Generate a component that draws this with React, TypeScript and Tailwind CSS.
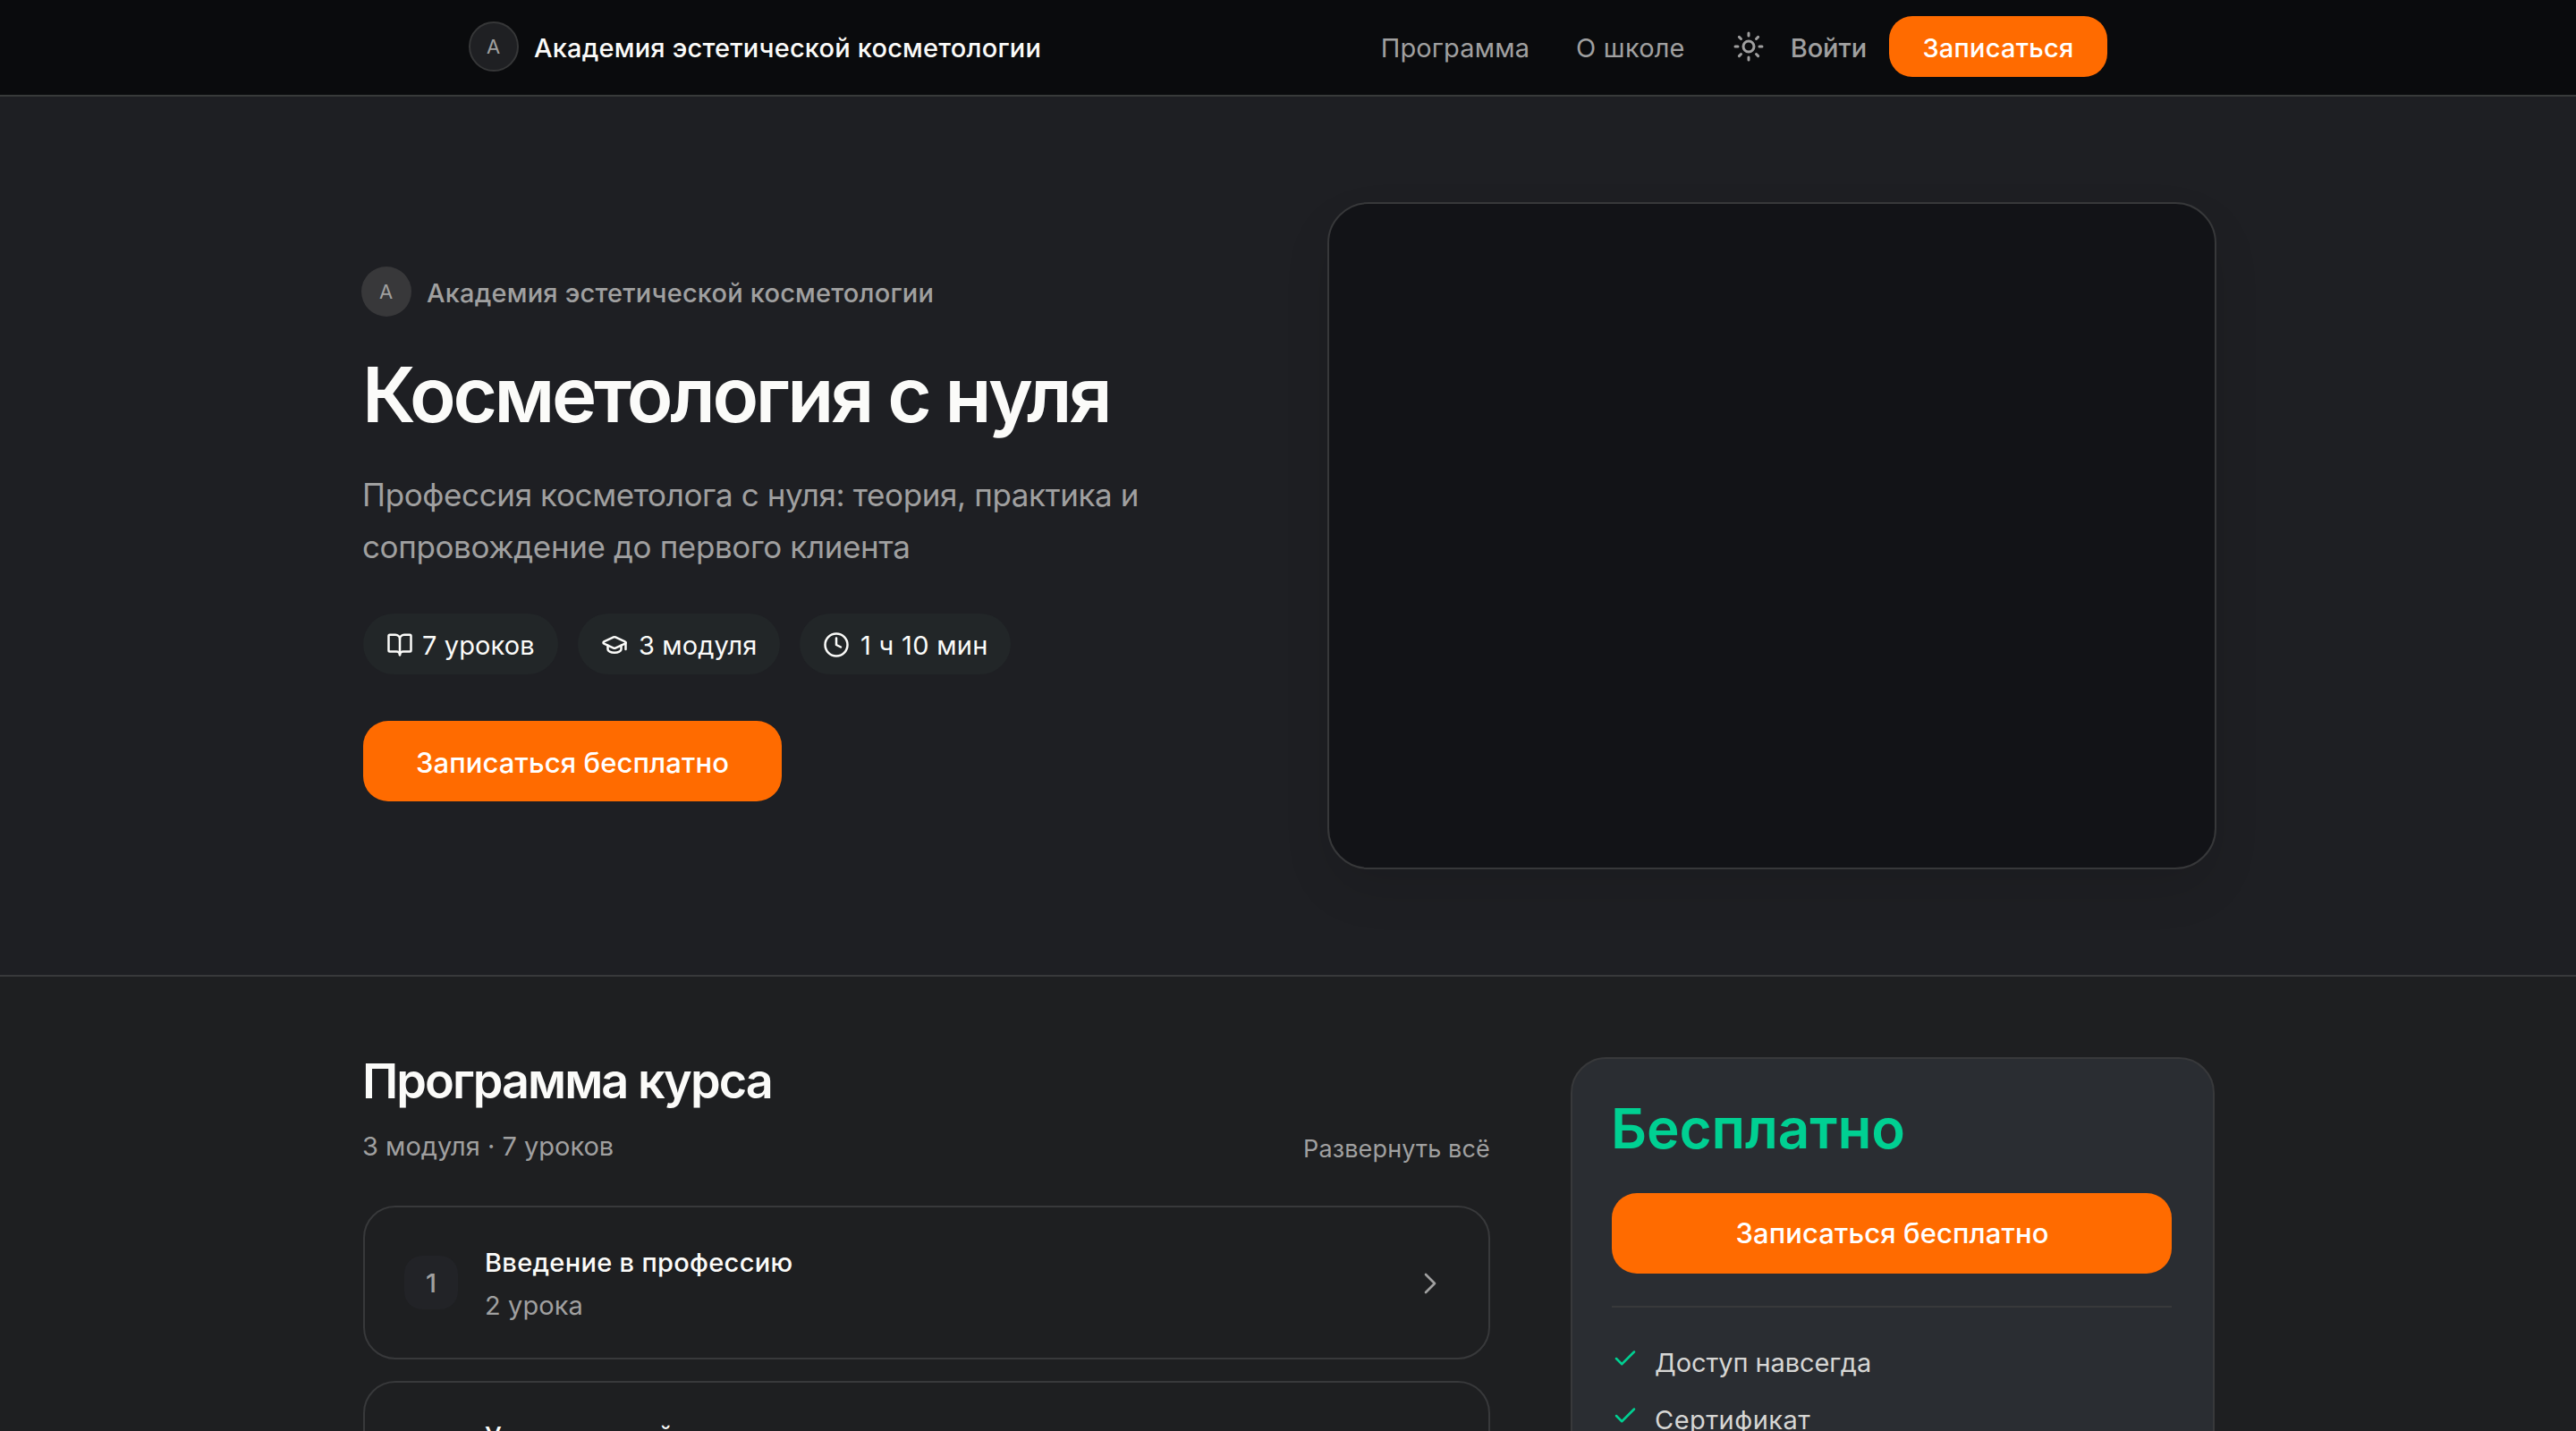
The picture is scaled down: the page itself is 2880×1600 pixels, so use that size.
import { BookOpen, Check, ChevronRight, Clock, GraduationCap, Sun } from 'lucide-react';

const modules = [
  { id: 1, title: 'Введение в профессию', lessons: '2 урока', className: 'pt-[3px]' },
  { id: 2, title: 'Уход за кожей', lessons: '', className: 'pb-px' },
];

const benefits = [
  { text: 'Доступ навсегда', className: 'tracking-[-0.1px]' },
  { text: 'Сертификат', className: 'tracking-[0.45px]' },
];

function Header() {
  return (
    <header className="h-[108px] border-b-2 border-[#383a3a] bg-[#0a0b0d]">
      <div className="mx-auto flex h-[104px] w-[1832px] items-center justify-between">
        <a className="flex items-center gap-[17px]">
          <span className="flex size-14 items-center justify-center rounded-full border-2 border-[#363738] bg-[#1f2023] pr-px text-[22px] leading-none text-[#a0a0a0]">
            А
          </span>
          <span className="pt-[3px] text-[29px] leading-[40px] font-medium tracking-[0.2px] text-[#fbfbf9]">
            Академия эстетической косметологии
          </span>
        </a>

        <nav className="flex items-center text-[29px] leading-[40px] text-[#a0a0a0]">
          <a className="mr-[52px] pt-[3px] tracking-[0.15px]">Программа</a>
          <a className="mr-[53px] pt-[3px] tracking-[0.2px]">О школе</a>
          <button type="button" aria-label="Тема" className="mr-[29px]">
            <Sun size={36} strokeWidth={2} />
          </button>
          <a className="mr-[25px] pt-[3px] font-medium tracking-[-0.1px]">Войти</a>
          <button
            type="button"
            className="h-[68px] w-[244px] rounded-[26px] bg-[#ff6b00] pt-[3px] font-medium tracking-[0.25px] text-white"
          >
            Записаться
          </button>
        </nav>
      </div>
    </header>
  );
}

function Hero() {
  return (
    <section className="h-[984px] border-b-2 border-[#38393b] bg-[#1e1f23] pt-[118px]">
      <div className="mx-auto flex w-[2072px] justify-between">
        <div className="pt-[72px]">
          <div className="flex items-center gap-[17px]">
            <span className="flex size-14 items-center justify-center rounded-full bg-[#38383a] pr-px text-[22px] leading-none text-[#a0a0a0]">
              А
            </span>
            <span className="pt-[3px] text-[29px] leading-[40px] font-medium tracking-[0.2px] text-[#a0a0a0]">
              Академия эстетической косметологии
            </span>
          </div>

          <div className="pl-0.5">
            <h1 className="mt-[39px] -ml-px pt-px text-[85px] leading-[95px] font-semibold tracking-[-3.35px] text-[#fbfbf9]">
              Косметология с нуля
            </h1>
            <p className="mt-[35px] -ml-px w-[900px] text-[35px] leading-[58px] tracking-[-0.38px] text-[#a0a0a0]">
              Профессия косметолога с нуля: теория, практика и сопровождение до первого клиента
            </p>

            <div className="mt-[46px] flex gap-[22px] text-[29px] leading-[40px] tracking-[0.1px] text-[#fbfbf9]">
              <div className="flex h-[68px] w-[218px] items-center gap-2.5 rounded-full bg-[#222628] pt-[2px] pl-[26px]">
                <BookOpen size={30} />
                <span className="pt-px">7 уроков</span>
              </div>
              <div className="flex h-[68px] w-[226px] items-center gap-3 rounded-full bg-[#222628] pt-[2px] pl-[26px]">
                <GraduationCap size={30} />
                <span className="pt-px">3 модуля</span>
              </div>
              <div className="flex h-[68px] w-[236px] items-center gap-[12px] rounded-full bg-[#222628] pt-[2px] pl-[26px]">
                <Clock size={30} />
                <span className="pt-px tracking-[0.3px]">1 ч 10 мин</span>
              </div>
            </div>

            <button
              type="button"
              className="mt-[52px] h-[90px] w-[468px] rounded-[28px] bg-[#ff6b00] pt-[3px] text-[31px] leading-[40px] font-medium tracking-[0.1px] text-white"
            >
              Записаться бесплатно
            </button>
          </div>
        </div>

        <div className="-mr-0.5 h-[746px] w-[994px] rounded-[46px] border-2 border-[#37383a] bg-[#121317] shadow-[0_24px_56px_-4px_rgba(0,0,0,0.11)]" />
      </div>
    </section>
  );
}

function Program() {
  return (
    <div className="w-[1260px]">
      <h2 className="-ml-px text-[54px] leading-[54px] font-semibold tracking-[-1.95px] text-[#fbfbf9]">
        Программа курса
      </h2>
      <div className="mt-[26px] -ml-px flex items-end justify-between text-[#a0a0a0]">
        <p className="text-[29px] leading-[40px]">3 модуля · 7 уроков</p>
        <button type="button" className="pt-px text-[27px] leading-[35px] tracking-[0.15px]">
          Развернуть всё
        </button>
      </div>

      <div className="mt-[46px] flex flex-col gap-6">
        {modules.map((m) => (
          <div
            key={m.id}
            className="flex h-[172px] items-center rounded-[36px] border-2 border-[#38393b] pr-[45px] pl-[44px]"
          >
            <span className="flex size-[60px] items-center justify-center rounded-[20px] bg-[#222327] pt-[2px] text-[29px] leading-[40px] font-medium text-[#a0a0a0]">
              {m.id}
            </span>
            <div className={`flex flex-1 flex-col gap-2 pl-[30px] text-[29px] leading-[40px] ${m.className}`}>
              <span className="font-medium tracking-[0.3px] text-[#fbfbf9]">{m.title}</span>
              <span className="h-10 tracking-[0.1px] text-[#a0a0a0]">{m.lessons}</span>
            </div>
            <ChevronRight size={40} strokeWidth={1.6} className="mt-[2px] text-[#a0a0a0]" />
          </div>
        ))}
      </div>
    </div>
  );
}

function PriceCard() {
  return (
    <aside className="h-[640px] w-[720px] rounded-[40px] border-2 border-[#38393b] bg-[#2a2d32] pt-[42px] pr-[46px] pl-[44px]">
      <div className="-ml-px text-[62px] leading-[72px] font-semibold tracking-[-0.1px] text-[#00d092]">
        Бесплатно
      </div>
      <button
        type="button"
        className="mt-9 h-[90px] w-full rounded-[28px] bg-[#ff6b00] pl-px text-[31px] leading-[40px] font-medium tracking-[0.1px] text-white"
      >
        Записаться бесплатно
      </button>
      <ul className="mt-9 flex flex-col gap-[23px] border-t-2 border-[#38393b] pt-[41px]">
        {benefits.map((b) => (
          <li key={b.text} className="flex items-start gap-[18px] text-[29px] leading-[40px] text-[#d6d6d4]">
            <Check size={30} className="mt-px text-[#00d092]" />
            <span className={`pt-px ${b.className}`}>{b.text}</span>
          </li>
        ))}
      </ul>
    </aside>
  );
}

export default function App() {
  return (
    <div className="h-[1600px] w-[2880px] overflow-hidden bg-[#1e1f21] font-['Inter',sans-serif] antialiased">
      <Header />
      <Hero />
      <section className="mx-auto flex w-[2072px] items-start justify-between pt-[90px] pl-0.5">
        <Program />
        <PriceCard />
      </section>
    </div>
  );
}
